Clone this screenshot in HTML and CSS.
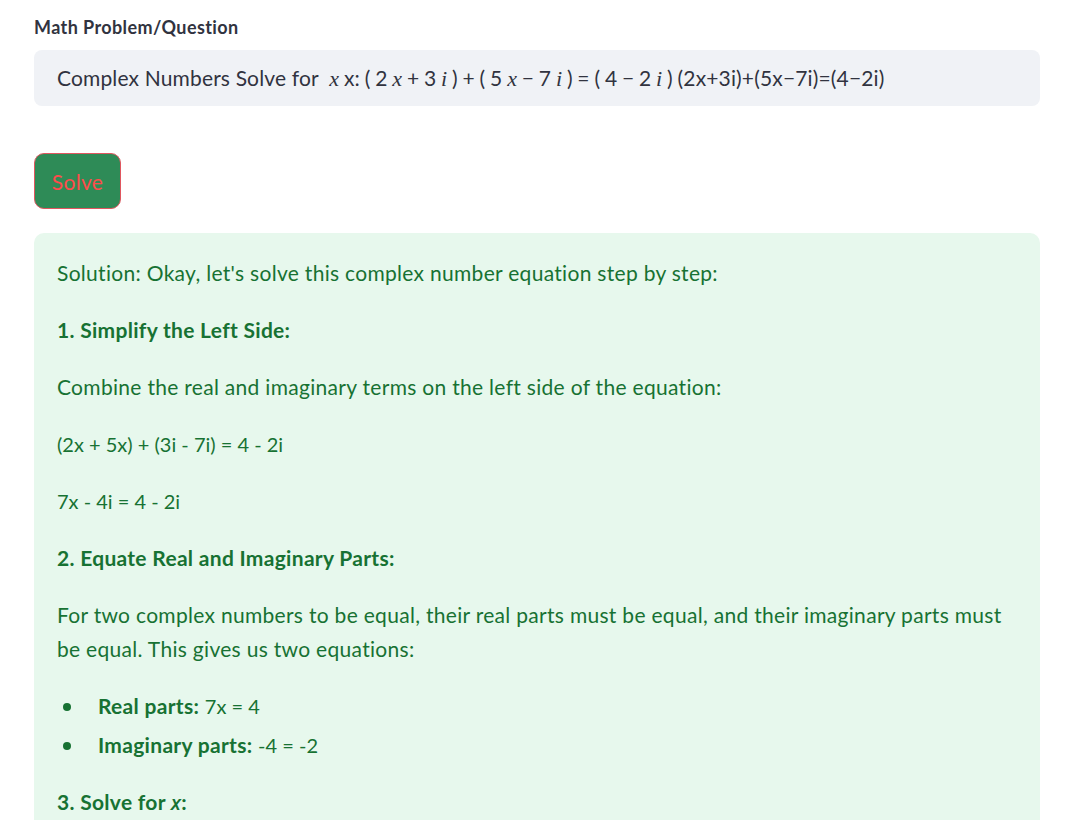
FILE: index.html
```html
<!DOCTYPE html>
<html lang="en">
<head>
<meta charset="utf-8">
<title>Math Solver</title>
<link rel="stylesheet" href="styles.css">
</head>
<body>
<main class="page">
  <label class="field-label">Math Problem/Question</label>
  <div class="input-box">Complex Numbers Solve for&nbsp; <span class="math"><span class="mi">x</span> x: ( 2 <span class="mi">x</span> + 3 <span class="mi">i</span> ) + ( 5 <span class="mi">x</span> − 7 <span class="mi">i</span> ) = ( 4 − 2 <span class="mi">i</span> ) </span>(2x+3i)+(5x−7i)=(4−2i)</div>
  <button class="solve-btn">Solve</button>
  <section class="success">
    <p>Solution: Okay, let's solve this complex number equation step by step:</p>
    <p><strong>1. Simplify the Left Side:</strong></p>
    <p>Combine the real and imaginary terms on the left side of the equation:</p>
    <p class="eq">(2x + 5x) + (3i - 7i) = 4 - 2i</p>
    <p class="eq">7x - 4i = 4 - 2i</p>
    <p><strong>2. Equate Real and Imaginary Parts:</strong></p>
    <p>For two complex numbers to be equal, their real parts must be equal, and their imaginary parts must be equal. This gives us two equations:</p>
    <ul class="bullets">
      <li><strong>Real parts:</strong> <span class="eq">7x = 4</span></li>
      <li><strong>Imaginary parts:</strong> <span class="eq">-4 = -2</span></li>
    </ul>
    <p><strong>3. Solve for <em class="var">x</em>:</strong></p>
  </section>
</main>
</body>
</html>
```

FILE: styles.css
```css
html, body {
  margin: 0;
  padding: 0;
  background: #ffffff;
}

.page {
  font-family: Lato, "Liberation Sans", sans-serif;
  width: 1006px;
  padding: 14px 0 0 34px;
  color: #31333f;
}

.field-label {
  display: block;
  font-size: 18px;
  font-weight: 700;
  letter-spacing: 0.4px;
  line-height: 26px;
  color: #31333f;
  margin-bottom: 10px;
}

.input-box {
  height: 56px;
  line-height: 56px;
  background: #f0f2f6;
  border-radius: 8px;
  padding: 0 23px;
  font-size: 21px;
  letter-spacing: 0.15px;
  color: #31333f;
  white-space: nowrap;
  overflow: hidden;
}

.math {
  word-spacing: -0.8px;
}

.mi {
  font-family: "Liberation Serif", "DejaVu Serif", serif;
  font-style: italic;
  font-size: 22px;
}

.solve-btn {
  display: block;
  margin-top: 47px;
  width: 87px;
  height: 56px;
  background: #2e8b57;
  border: 1px solid #e0565f;
  border-radius: 10px;
  color: #ff4b4b;
  font-family: inherit;
  font-size: 21px;
  letter-spacing: 0.3px;
  padding: 0;
  cursor: pointer;
}

.success {
  margin-top: 24px;
  background: #e7f8ed;
  border-radius: 10px;
  padding: 23px 23px 10px;
  color: #177233;
  font-size: 21px;
  letter-spacing: 0.3px;
  line-height: 34px;
}

.success p {
  margin: 0 0 23px;
}

.success strong {
  font-weight: 700;
}

.var {
  font-family: "Open Sans", "Liberation Sans", sans-serif;
  font-style: italic;
  font-weight: 600;
  font-size: 20px;
}

.eq {
  font-weight: 400;
  font-size: 20px;
  letter-spacing: 0;
}

.bullets {
  list-style: none;
  margin: 0 0 23px;
  padding: 0 0 0 41px;
}

.bullets li {
  position: relative;
  margin-bottom: 5px;
}

.bullets li::before {
  content: "";
  position: absolute;
  left: -35px;
  top: 14px;
  width: 8px;
  height: 8px;
  border-radius: 50%;
  background: #177233;
}
```
